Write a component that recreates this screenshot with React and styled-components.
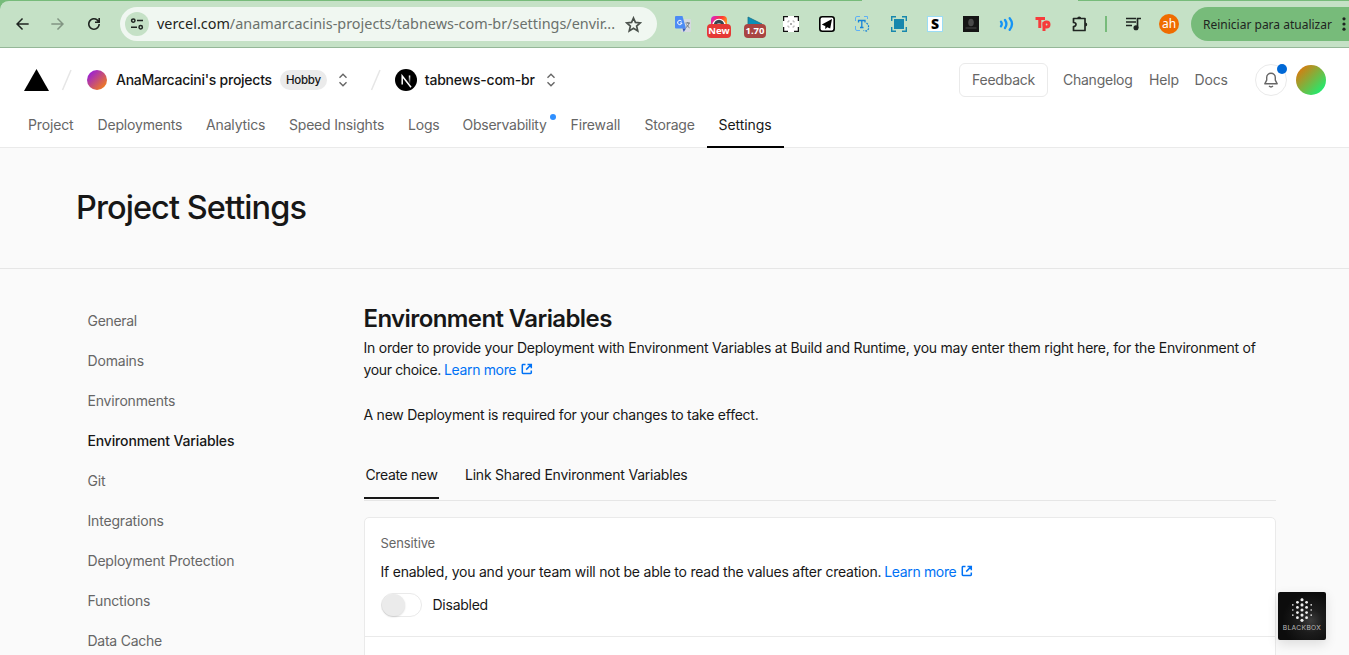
import React from "react";
import styled, { createGlobalStyle, css } from "styled-components";

const Global = createGlobalStyle`
  *{box-sizing:border-box}
  html,body{margin:0;height:100%;overflow:hidden;background:#fafafa}
  body{font-family:Inter,"Liberation Sans",sans-serif;font-size:14px;color:#171717}
  svg{display:block;flex:none}
`;

const Page = styled.div`
  height: 655px;
  display: flex;
  flex-direction: column;
  overflow: hidden;
`;

/* Text run with individually tuned tracking */
const T = styled.span`
  white-space: nowrap;
  letter-spacing: ${(p) => p.$ls ?? -0.18}px;
`;

/* ---------- Browser toolbar ---------- */
const TabEdge = styled.div`
  flex: none;
  height: 48px;
  background: linear-gradient(to right, #77bb7a 0 862px, #c5e1c6 862px 1078px, #77bb7a 1078px);
`;
const Toolbar = styled.div`
  height: 48px;
  border-top: 1px solid transparent;
  background: #c5e1c6;
  background-clip: padding-box;
  border-bottom: 1px solid #95b798;
  border-top-left-radius: 9px;
  display: flex;
  align-items: center;
  color: #1f2521;
  font-family: "Noto Sans", sans-serif;
`;
const NavButtons = styled.div`
  display: flex;
  gap: 20px;
  padding-left: 14px;
  width: 120px;
  flex: none;
`;
const NavButton = styled.div`
  width: 16px;
  opacity: ${(p) => (p.$dim ? 0.4 : 1)};
`;
const Omnibox = styled.div`
  width: 537px;
  height: 34px;
  flex: none;
  border-radius: 17px;
  background: #f0f7f1;
  display: flex;
  align-items: center;
  padding: 0 15.5px 0 5px;
`;
const SiteChip = styled.div`
  width: 24px;
  height: 24px;
  flex: none;
  border-radius: 50%;
  background: #c5e1c6;
  display: grid;
  place-items: center;
  margin-right: 8px;
`;
const Url = styled.div`
  font-size: 14.4px;
  line-height: 20px;
  letter-spacing: 0.01px;
  color: #6b716c;
  flex: 1;
  min-width: 0;
  white-space: nowrap;
  b { font-weight: 400; color: #1f2521; }
`;
const Extensions = styled.div`
  display: flex;
  gap: 12px;
  padding-left: 14px;
  flex: none;
`;
const Ext = styled.div`
  width: 24px;
  height: 24px;
  display: grid;
  place-items: center;
  position: relative;
`;
const ExtBadge = styled.span`
  position: absolute;
  left: 0;
  top: 12px;
  width: ${(p) => p.$w}px;
  margin-left: ${(p) => (24 - p.$w) / 2}px;
  height: 14px;
  border-radius: 4px;
  background: ${(p) => p.$bg};
  color: #fff;
  font: 700 9.5px/14px "Noto Sans", sans-serif;
  text-align: center;
`;
const LetterTile = styled.div`
  width: 16px;
  height: 16px;
  background: #fff;
  border: 1px solid #9bdcf5;
  color: #000;
  font: 900 14px/14px "Noto Sans", sans-serif;
  text-align: center;
`;
const Divider = styled.div`
  width: 2px;
  height: 16px;
  flex: none;
  background: #77bb7a;
  margin: 0 17px 0 14px;
`;
const Profile = styled.div`
  width: 20px;
  height: 20px;
  border-radius: 50%;
  background: #ef6c00;
  color: #fff;
  font-size: 12px;
  line-height: 19px;
  text-align: center;
  margin: 0 12px 0 15px;
  flex: none;
`;
const Restart = styled.div`
  height: 34px;
  flex: 1;
  background: #77bb7a;
  border-radius: 17px 0 0 17px;
  padding-left: 12px;
  display: flex;
  align-items: center;
  justify-content: space-between;
  font-size: 12px;
`;

/* ---------- Dashboard header ---------- */
const Header = styled.header`
  flex: none;
  height: 100px;
  background: #fff;
  border-bottom: 1px solid #eaeaea;
  display: flex;
  flex-direction: column;
`;
const Crumbs = styled.div`
  height: 64px;
  flex: none;
  display: flex;
  align-items: center;
  padding: 0 23px 0 24px;
`;
const Crumb = styled.div`
  display: flex;
  align-items: center;
  font-weight: 500;
  line-height: 16px;
  margin-left: ${(p) => p.$ml}px;
`;
const Avatar = styled.div`
  width: ${(p) => p.$s}px;
  height: ${(p) => p.$s}px;
  border-radius: 50%;
  flex: none;
  background: linear-gradient(135deg, ${(p) => p.$a}, ${(p) => p.$b});
`;
const Plan = styled.div`
  width: 47px;
  height: 20px;
  border-radius: 10px;
  background: #ebebeb;
  font-size: 11.5px;
  line-height: 20px;
  letter-spacing: -0.25px;
  text-align: center;
  white-space: nowrap;
`;
const HeaderLinks = styled.div`
  margin-left: auto;
  display: flex;
  align-items: center;
  color: #666;
`;
const Feedback = styled.div`
  width: 89px;
  height: 34px;
  border: 1px solid #eaeaea;
  border-radius: 6px;
  line-height: 32px;
  text-align: center;
  margin-right: 15px;
`;
const Link = styled.div`
  width: ${(p) => p.$w}px;
  line-height: 16px;
  white-space: nowrap;
`;
const Bell = styled.div`
  position: relative;
  width: 32px;
  height: 32px;
  border: 1px solid #eaeaea;
  border-radius: 50%;
  display: grid;
  place-items: center;
  margin-right: 9px;
`;
const Notice = styled.i`
  position: absolute;
  right: -1px;
  top: -1px;
  width: 10px;
  height: 10px;
  border-radius: 50%;
  background: #0068d6;
`;
const Tabs = styled.nav`
  height: 36px;
  flex: none;
  display: flex;
  padding-left: 16px;
`;
const Tab = styled.div`
  position: relative;
  height: 36px;
  flex: none;
  width: ${(p) => p.$w}px;
  padding-left: 12px;
  line-height: 26px;
  color: #666;
  ${(p) => p.$on && css`color: #171717; border-bottom: 2px solid #000;`}
`;
const TabDot = styled.i`
  position: absolute;
  right: 3px;
  top: 2px;
  width: 6px;
  height: 6px;
  border-radius: 50%;
  background: #2e8fff;
`;

/* ---------- Body ---------- */
const TitleBand = styled.div`
  flex: none;
  height: 121px;
  border-bottom: 1px solid #e6e6e6;
  padding: 40px 0 0 76px;
`;
const Title = styled.h1`
  margin: 0;
  font-size: 32.5px;
  line-height: 40px;
  font-weight: 500;
`;
const Columns = styled.div`
  flex: 1;
  min-height: 0;
  display: flex;
`;
const Side = styled.aside`
  width: 363.5px;
  flex: none;
  padding: 32px 0 0 87.5px;
`;
const SideItem = styled.div`
  height: 40px;
  line-height: 40px;
  color: ${(p) => (p.$on ? "#171717" : "#666")};
  font-weight: ${(p) => (p.$on ? 500 : 400)};
`;
const Main = styled.main`
  width: 912px;
  flex: none;
  padding-top: 34px;
`;
const Heading = styled.h2`
  margin: 0;
  font-size: 24px;
  line-height: 32px;
  font-weight: 600;
`;
const Line = styled.div`
  display: flex;
  align-items: center;
  height: ${(p) => p.$h || 22}px;
  margin-top: ${(p) => p.$mt || 0}px;
`;
const A = styled.a`
  color: #0072f5;
  display: inline-flex;
  align-items: center;
  gap: 4.5px;
  margin-left: 3px;
`;
const SubTabs = styled.div`
  display: flex;
  height: 50px;
  margin-top: 26px;
  border-bottom: 1px solid #e6e6e6;
`;
const SubTab = styled.div`
  height: 48px;
  line-height: 48px;
  padding-left: 2px;
  width: ${(p) => p.$w}px;
  margin-right: 24.500px;
  ${(p) => p.$on && css`border-bottom: 2px solid #171717;`}
`;
const Card = styled.section`
  margin-top: 16px;
  height: 300px;
  background: #fff;
  border: 1px solid #eaeaea;
  border-radius: 5px;
`;
const CardRow = styled.div`
  height: 119px;
  border-bottom: 1px solid #eaeaea;
  padding: 16px 16px;
`;
const Label = styled.div`
  font-size: 13px;
  line-height: 19px;
  letter-spacing: -0.12px;
  color: #666;
`;
const Switch = styled.div`
  width: 41px;
  height: 24px;
  border: 1px solid #eaeaea;
  border-radius: 12px;
  margin-right: 11px;
  &::before {
    content: "";
    display: block;
    width: 23px;
    height: 22px;
    border-radius: 50%;
    background: #ebebeb;
    box-shadow: 0 1px 2px rgba(0, 0, 0, 0.15);
  }
`;
const SwitchLabel = styled.div`
  line-height: 16px;
  padding-bottom: 1px;
`;
const Blackbox = styled.div`
  position: absolute;
  left: 1278px;
  top: 592px;
  width: 48px;
  height: 48px;
  border-radius: 2px;
  background: radial-gradient(circle at 68% 60%, #3c3c3c 0, #1c1c1c 28%, #0c0c0c 65%);
  box-shadow: 0 4px 12px rgba(0, 0, 0, 0.12);
  color: #bbb;
  font: 6.7px/8px Inter, sans-serif;
  letter-spacing: 0.35px;
  display: flex;
  flex-direction: column;
  align-items: center;
  padding-top: 6px;
  gap: 2px;
`;

const Icon = ({ s = 16, vb = 24, children }) => (
  <svg width={s} height={s} viewBox={`0 0 ${vb} ${vb}`} fill="currentColor">{children}</svg>
);
const Slash = () => (
  <svg width="16" height="24" viewBox="0 0 16 24"><path d="M12 2L3.5 22" stroke="#e6e6e6" strokeWidth="1.5" /></svg>
);
const Chevrons = () => (
  <svg width="16" height="16" viewBox="0 0 16 16" fill="none" stroke="#666" strokeWidth="1.4"><path d="M4.5 5.8L8 2.3l3.5 3.5M4.5 10.2L8 13.7l3.5-3.5" /></svg>
);
const External = () => (
  <svg width="12" height="12" viewBox="0 0 12 12" fill="none" stroke="currentColor" strokeWidth="1.5"><path d="M4.500 1.500H2a.7.7 0 0 0-.7.7v7.600a.7.7 0 0 0 .7.7h7.600a.7.7 0 0 0 .7-.7V7.500M6.500 1.500h3.800v3.800M10 1.800L5.200 6.600" /></svg>
);
const Dots = ({ w, h }) => {
  const cols = [[-8.8, 3, 0.8], [-4.4, 4, 1.35], [0, 5, 1.5], [4.4, 4, 1.35], [8.8, 3, 0.8]];
  return (
    <svg width={w} height={h} viewBox="-10.500 -11.500 21 23" fill="#eee">
      {cols.flatMap(([x, n, r]) => Array.from({ length: n }, (_, i) => (
        <circle key={`${x}-${i}`} cx={x} cy={(i - (n - 1) / 2) * 4.9} r={r} />
      )))}
      <circle cx="0" cy="-10.300" r=".8" />
      <circle cx="0" cy="10.300" r=".8" />
    </svg>
  );
};

const tabs = [
  ["Project", 69.5, -0.15], ["Deployments", 108.5, -0.18], ["Analytics", 83, -0.15], ["Speed Insights", 119, -0.2],
  ["Logs", 54.5, -0.2], ["Observability", 108, -0.26], ["Firewall", 74, -0.12], ["Storage", 74, -0.22], ["Settings", 77.5, -0.05],
];
const side = ["General", "Domains", "Environments", "Environment Variables", "Git", "Integrations", "Deployment Protection", "Functions", "Data Cache"];
const sideTracking = { General: -0.3, "Environment Variables": -0.15, "Deployment Protection": -0.2, "Data Cache": -0.25 };

export default function App() {
  return (
    <Page>
      <Global />
      <TabEdge>
        <Toolbar>
          <NavButtons>
            <NavButton><Icon><path d="M12 3l1.6 1.6L7.3 10.9H22v2.2H7.3l6.3 6.3L12 21l-9-9z" /></Icon></NavButton>
            <NavButton $dim><Icon><path d="M12 3l-1.6 1.6 6.3 6.3H2v2.2h14.7l-6.3 6.3L12 21l9-9z" /></Icon></NavButton>
            <NavButton><Icon><path d="M12 21a9 9 0 1 1 6.6-15.1V3H21v7.5h-7.5V8.1h3.8A6.6 6.6 0 1 0 18.600 12H21a9 9 0 0 1-9 9z" /></Icon></NavButton>
          </NavButtons>
          <Omnibox>
            <SiteChip>
              <svg width="14" height="14" viewBox="0 0 14 14" fill="none" stroke="#1f2521" strokeWidth="1.5"><circle cx="3.3" cy="3.6" r="1.7" /><path d="M7 3.6h6M1 10.2h6" /><circle cx="10.7" cy="10.2" r="1.7" /></svg>
            </SiteChip>
            <Url><b>vercel.com</b>/anamarcacinis-projects/tabnews-com-br/settings/envir...</Url>
            <svg width="17" height="17" viewBox="0 0 24 24" fill="none" stroke="#4a514c" strokeWidth="2.4"><path d="M12 2.8l2.700 6.300 6.900.6-5.200 4.500 1.600 6.800-6-3.600-6 3.600 1.600-6.800-5.200-4.500 6.900-.6z" /></svg>
          </Omnibox>
          <Extensions>
            <Ext>
              <svg width="16" height="16" viewBox="0 0 16 16"><rect x="6" y="3" width="10" height="13" rx="1" fill="#d5d9df" /><path d="M1 0h6.5L11 12.5H1a1 1 0 0 1-1-1V1a1 1 0 0 1 1-1z" fill="#4c8bf5" /><path d="M7.5 12.5H11L8.7 16z" fill="#3459b5" /><path d="M6.6 5.2A2.2 2.2 0 1 0 7 7H5" fill="none" stroke="#fff" /><path d="M10.5 7H15M12.8 6v1M14 7c-.3 2-1.5 3.5-3 4.5M11.5 8.5c.6 1.4 1.8 2.5 3 3.3" fill="none" stroke="#687078" strokeWidth=".9" /></svg>
            </Ext>
            <Ext>
              <svg width="16" height="16" viewBox="0 0 16 16"><defs><linearGradient id="rainbow" x1="0" y1="0" x2="1" y2=".7"><stop offset="0" stopColor="#d71be0" /><stop offset=".5" stopColor="#ff3b30" /><stop offset="1" stopColor="#ffc21a" /></linearGradient></defs><rect width="16" height="16" rx="4" fill="url(#rainbow)" /><circle cx="8" cy="9.500" r="6.800" fill="#fff" /><circle cx="8" cy="9" r="5.200" fill="#354651" /><circle cx="8" cy="9.500" r="2.600" fill="#9aa4aa" /></svg>
              <ExtBadge $w={24} $bg="#e53935">New</ExtBadge>
            </Ext>
            <Ext>
              <svg width="16" height="16" viewBox="0 0 16 16"><path d="M1 1l14 7-14 7z" fill="#0c8fb8" stroke="#1a7187" strokeWidth=".8" /></svg>
              <ExtBadge $w={22} $bg="#a94442">1.70</ExtBadge>
            </Ext>
            <Ext>
              <svg width="16" height="16" viewBox="0 0 16 16"><rect width="16" height="16" fill="#fff" /><path d="M.5 5V.5H5M11 .5h4.500V5M15.500 11v4.500H11M5 15.500H.5V11" fill="none" stroke="#111" strokeWidth="1.5" /><path d="M5 6.5V5h1.500M9.500 5H11v1.500M11 9.500V11H9.500M6.500 11H5V9.500M7 7l2 2M9 7L7 9" stroke="#999" fill="none" strokeWidth=".8" /></svg>
            </Ext>
            <Ext>
              <svg width="16" height="16" viewBox="0 0 16 16"><rect x=".8" y=".8" width="14.400" height="14.400" rx="2.5" fill="#fff" stroke="#000" strokeWidth="1.6" /><path d="M13 3L2.800 8.600l3.200 1.300zM13 3L6.300 9.800v3.400l1.900-2 3 1.200z" fill="#000" /></svg>
            </Ext>
            <Ext>
              <svg width="16" height="16" viewBox="0 0 16 16" fill="none" stroke="#5fb0f5"><path d="M.5 5V2q0-1.500 1.500-1.500h3M9 .5h3.500V3M.5 10v3q0 1.500 1.500 1.500h3" /><path d="M3.500 6.500v-2h6.500v2M6.800 4.500v7M5 11.500h3.500" stroke="#1683d8" strokeWidth="1.300" /><path d="M11.500 7l2 2v4l-2 2-3-.5" stroke="#1683d8" strokeWidth="1.200" strokeDasharray="2 1" /></svg>
            </Ext>
            <Ext>
              <svg width="16" height="16" viewBox="0 0 16 16"><path d="M.7 5V.7H5M11 .7h4.300V5M15.300 11v4.300H11M5 15.300H.7V11" fill="none" stroke="#1787ad" strokeWidth="1.400" /><rect x="3" y="3" width="10" height="10" fill="#1787ad" /></svg>
            </Ext>
            <Ext><LetterTile>S</LetterTile></Ext>
            <Ext>
              <svg width="16" height="16" viewBox="0 0 16 16"><rect width="16" height="16" fill="#151515" /><ellipse cx="8" cy="6.500" rx="2.800" ry="3.800" fill="#4a4a4a" /><path d="M2.500 12h11" stroke="#484848" /></svg>
            </Ext>
            <Ext>
              <svg width="16" height="16" viewBox="0 0 16 16" fill="none" stroke="#1594f5" strokeWidth="2.300" strokeLinecap="round"><path d="M2 5.800q1.600 2.200 0 4.400M6 4q2.800 4 0 8M10.700 2.200q4.600 5.800 0 11.600" /></svg>
            </Ext>
            <Ext>
              <svg width="16" height="16" viewBox="0 0 16 16" fill="none" stroke="#f73b3b" strokeWidth="3"><path d="M.5 2.500h9.500M4.800 2.500V12M9 15V6" /><circle cx="11.500" cy="8.500" r="2.500" /></svg>
            </Ext>
            <Ext>
              <svg width="18" height="18" viewBox="0 0 18 18" fill="none" stroke="#1f2521" strokeWidth="1.700"><path d="M3.500 3.500H15v12H3.500v-4c3.300 0 3.300-4 0-4z" strokeLinejoin="round" /><path d="M7.200 3.400a2 2 0 0 1 4 0zM15.200 7.500a2 2 0 0 1 0 4z" fill="#1f2521" stroke="none" /></svg>
            </Ext>
          </Extensions>
          <Divider />
          <svg width="20" height="16" viewBox="0 0 20 16" fill="none" stroke="#1f2521" strokeWidth="1.700"><path d="M2 2.500h10M2 6h10M2 9.500h6M13.500 12V2.500H17" /><circle cx="12" cy="11.800" r="1.700" fill="#1f2521" /></svg>
          <Profile>ah</Profile>
          <Restart><T $ls={0}>Reiniciar para atualizar</T>
            <svg width="8" height="16" viewBox="0 0 8 16" fill="#1f2521"><circle cx="3" cy="2.800" r="1.600" /><circle cx="3" cy="8" r="1.600" /><circle cx="3" cy="13.200" r="1.600" /></svg>
          </Restart>
        </Toolbar>
      </TabEdge>

      <Header>
        <Crumbs>
          <svg width="25" height="22" viewBox="0 0 25 22"><path d="M12.500 0L25 22H0z" /></svg>
          <Crumb $ml={10}><Slash /></Crumb>
          <Crumb $ml={12}>
            <Avatar $s={20} $a="#8b10f5" $b="#ff8b00" />
            <Crumb $ml={9}><T $ls={-0.26}>AnaMarcacini's projects</T></Crumb>
            <Crumb $ml={8}><Plan>Hobby</Plan></Crumb>
            <Crumb $ml={8}><Chevrons /></Crumb>
          </Crumb>
          <Crumb $ml={17}><Slash /></Crumb>
          <Crumb $ml={11}>
            <svg width="22" height="22" viewBox="0 0 22 22"><defs><linearGradient id="stem" x1="0" y1="0" x2="0" y2="1"><stop stopColor="#fff" /><stop offset="1" stopColor="#fff" stopOpacity="0" /></linearGradient></defs><circle cx="11" cy="11" r="11" /><path d="M7.200 15.500V7L16 18.300" fill="none" stroke="#fff" strokeWidth="1.500" /><rect x="13.800" y="6.500" width="1.500" height="9" fill="url(#stem)" /></svg>
            <Crumb $ml={8}><T $ls={-0.22}>tabnews-com-br</T></Crumb>
            <Crumb $ml={8}><Chevrons /></Crumb>
          </Crumb>
          <HeaderLinks>
            <Feedback><T $ls={-0.25}>Feedback</T></Feedback>
            <Link $w={86}><T $ls={-0.25}>Changelog</T></Link>
            <Link $w={45.5}><T>Help</T></Link>
            <Link $w={60.5}><T>Docs</T></Link>
            <Bell>
              <svg width="16" height="16" viewBox="0 0 16 16" fill="none" stroke="#666" strokeWidth="1.400"><path d="M8 1.200a4.300 4.300 0 0 0-4.300 4.300v2.700L1.800 11.800h12.400l-1.900-3.600V5.500A4.300 4.300 0 0 0 8 1.200z" strokeLinejoin="round" /><path d="M6 14q2 1.800 4 0" /></svg>
              <Notice />
            </Bell>
            <Avatar $s={30} $a="#f56a00" $b="#00ff80" />
          </HeaderLinks>
        </Crumbs>
        <Tabs>
          {tabs.map(([n, w, ls]) => (
            <Tab key={n} $w={w} $on={n === "Settings"}><T $ls={ls}>{n}</T>{n === "Observability" && <TabDot />}</Tab>
          ))}
        </Tabs>
      </Header>

      <TitleBand><Title><T $ls={-0.93}>Project Settings</T></Title></TitleBand>
      <Columns>
        <Side>
          {side.map((n) => <SideItem key={n} $on={n === "Environment Variables"}><T $ls={sideTracking[n]}>{n}</T></SideItem>)}
        </Side>
        <Main>
          <Heading><T $ls={-0.6}>Environment Variables</T></Heading>
          <Line $mt={1}><T $ls={-0.234}>In order to provide your Deployment with Environment Variables at Build and Runtime, you may enter them right here, for the Environment of</T></Line>
          <Line><T $ls={-0.35}>your choice.</T><A><T $ls={-0.35}>Learn more</T><External /></A></Line>
          <Line $mt={23}><T $ls={-0.245}>A new Deployment is required for your changes to take effect.</T></Line>
          <SubTabs>
            <SubTab $on $w={75}><T $ls={-0.36}>Create new</T></SubTab>
            <SubTab $w={230}><T $ls={-0.22}>Link Shared Environment Variables</T></SubTab>
          </SubTabs>
          <Card>
            <CardRow>
              <Label>Sensitive</Label>
              <Line $mt={7}><T $ls={-0.223}>If enabled, you and your team will not be able to read the values after creation.</T><A><T $ls={-0.35}>Learn more</T><External /></A></Line>
              <Line $mt={11} $h={24}><Switch /><SwitchLabel><T $ls={-0.25}>Disabled</T></SwitchLabel></Line>
            </CardRow>
          </Card>
        </Main>
      </Columns>
      <Blackbox><Dots w={22} h={24} />BLACKBOX</Blackbox>
    </Page>
  );
}
